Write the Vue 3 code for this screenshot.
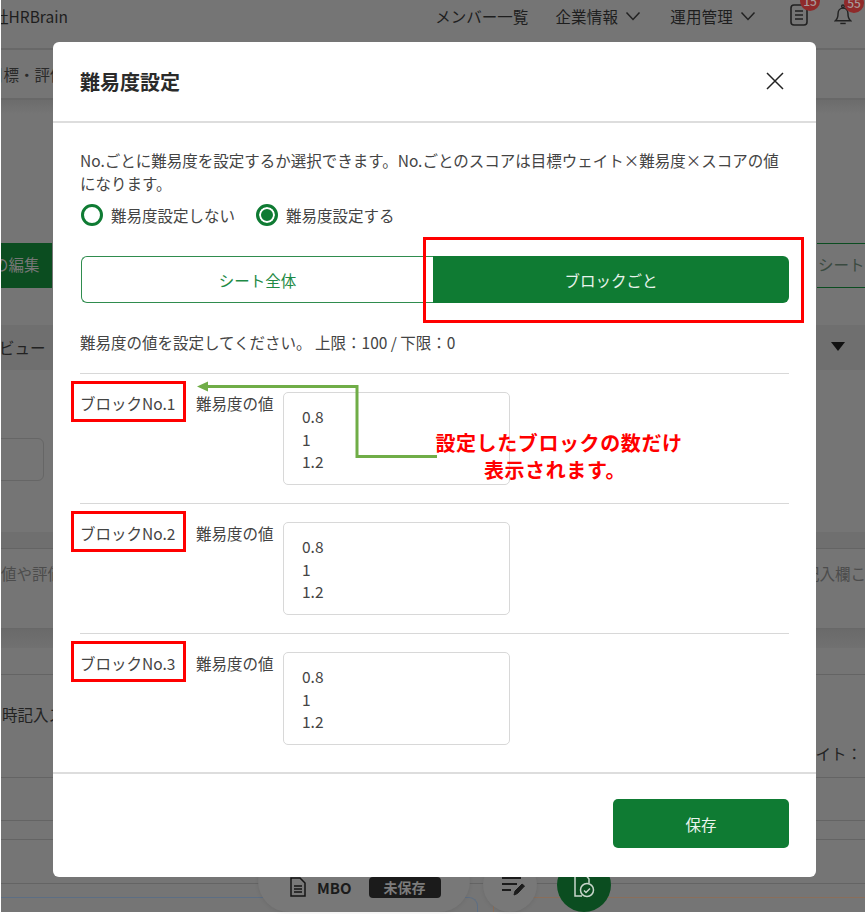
<script setup>
const blocks = [1, 2, 3]
const values = ['0.8', '1', '1.2']
</script>

<template>
  <div class="page">
    <div class="bg">
      <header class="top">
        <span class="brand">社HRBrain</span>
        <nav class="nav">
          <span class="members">メンバー一覧</span>
          <span class="drop">企業情報<svg width="16" height="10" viewBox="0 0 16 10"><path d="M1.5 1.5 8 8.5l6.5-7" fill="none" stroke="#222" stroke-width="1.5" /></svg></span>
          <span class="drop">運用管理<svg width="16" height="10" viewBox="0 0 16 10"><path d="M1.5 1.5 8 8.5l6.5-7" fill="none" stroke="#222" stroke-width="1.5" /></svg></span>
        </nav>
        <div class="alerts">
          <span class="alert clip">
            <svg width="18" height="24" viewBox="0 0 18 24" fill="none" stroke="#222" stroke-width="1.6"><rect x="1" y="3" width="16" height="20" rx="3" /><path d="M5 9h8M5 13h8M5 17h8" /></svg>
            <b class="badge">15</b>
          </span>
          <span class="alert bell">
            <svg width="18" height="24" viewBox="0 0 20 24" fill="none" stroke="#222" stroke-width="1.6"><path d="M1.5 19.5c2.5-2 3-4 3-8 0-3.500 2.200-6 5.500-6s5.500 2.500 5.500 6c0 4 .5 6 3 8z" /><path d="M7 22.500h6" /><circle cx="10" cy="3.500" r="1.500" /></svg>
            <b class="badge">55</b>
          </span>
        </div>
      </header>
      <div class="sub"><span class="crumb">目標・評価</span></div>
      <div class="fade"></div>
      <div class="tools">
        <span class="edit">の編集</span>
        <span class="tab">シート</span>
      </div>
      <div class="view"><span>ビュー</span><i class="tri"></i></div>
      <div class="field"></div>
      <div class="band b1"></div>
      <div class="row r1"><span>値や評価</span><span class="cut">記入欄こ</span></div>
      <div class="band b2"></div>
      <div class="row r2"></div>
      <div class="row r3"><span class="dark">時記入ス</span><span class="dark">ェイト：</span></div>
      <div class="row r4"></div>
      <div class="row r5"></div>
      <div class="row r6"></div>
      <div class="boxes">
        <div class="box-blue"></div>
        <div class="box-brown"></div>
      </div>
    </div>

    <div class="dock">
      <svg class="doc" width="16" height="20" viewBox="0 0 16 20" fill="none" stroke="#151515" stroke-width="1.500"><path d="M1 1h9l5 5v13H1z" /><path d="M4 9h8M4 12h8M4 15h8" /></svg>
      <b class="mbo">MBO</b>
      <span class="chip">未保存</span>
    </div>
    <span class="round pen">
      <svg width="24" height="20" viewBox="0 0 24 20" fill="none" stroke="#1c1c1c" stroke-width="1.800"><path d="M1 2h19M1 8h15M1 14h9" /><path d="M13 19l1-4 7-7 2.500 2-7 7.500z" fill="#1c1c1c" stroke-width="1" /></svg>
    </span>
    <span class="round ok">
      <svg width="22" height="28" viewBox="0 0 22 28" fill="none" stroke="#c9d6cc" stroke-width="1.500"><path d="M9 25H2V2h9l5 6v4" /><circle cx="14" cy="19" r="6.500" /><path d="M11 19.500l2 2 4-4" /></svg>
    </span>

    <section class="modal">
      <div class="head">
        <h1>難易度設定</h1>
        <svg width="20" height="20" viewBox="0 0 20 20"><path d="M2 2l16 16M18 2 2 18" stroke="#222" stroke-width="1.500" /></svg>
      </div>
      <div class="body">
        <p class="lead">No.ごとに難易度を設定するか選択できます。No.ごとのスコアは目標ウェイト×難易度×スコアの値になります。</p>
        <div class="radios">
          <span class="radio"><i class="mark"></i>難易度設定しない</span>
          <span class="radio on"><i class="mark"></i>難易度設定する</span>
        </div>
        <div class="seg">
          <span class="opt">シート全体</span>
          <span class="opt active">ブロックごと</span>
        </div>
        <p class="limit">難易度の値を設定してください。 上限：100 / 下限：0</p>
        <div v-for="n in blocks" :key="n" class="block">
          <span class="name">ブロックNo.{{ n }}<i class="hl"></i></span>
          <span class="cap">難易度の値</span>
          <div class="values">
            <div v-for="v in values" :key="v">{{ v }}</div>
          </div>
        </div>
      </div>
      <div class="foot">
        <span class="save">保存</span>
      </div>
    </section>

    <i class="hl-top"></i>
    <svg class="arrow" width="250" height="80" viewBox="0 0 250 80" fill="none">
      <path d="M240 71.500H160V1.500H10" stroke="#70ad47" stroke-width="3" />
      <path d="M0 1.500 11-3.500V6.500z" fill="#70ad47" />
    </svg>
    <p class="note">設定したブロックの数だけ<br /><span class="note-2">表示されます。</span></p>
  </div>
</template>

<style scoped>
.page {
  position: relative;
  width: 865px;
  height: 914px;
  overflow: hidden;
  background: #fff;
  font-family: "Noto Sans CJK JP", "Noto Sans", sans-serif;
  color: #3c3c3c;
}
.bg {
  margin-left: 1px;
  height: 912px;
  background: #757575;
  overflow: hidden;
  font-size: 15.5px;
}
.top {
  height: 50px;
  border-bottom: 2px solid #686868;
  box-sizing: border-box;
  display: flex;
  align-items: center;
  color: #1e1e1e;
  padding-bottom: 16px;
  line-height: 34px;
}
.brand {
  margin-left: -8px;
  flex: none;
}
.nav {
  margin-left: auto;
  display: flex;
  gap: 29px;
}
.members {
  margin-right: -2px;
}
.drop {
  display: flex;
  align-items: center;
  gap: 7px;
  letter-spacing: .2px;
}
.alerts {
  display: flex;
  margin: -4px 0 0 34px;
  gap: 26px;
  width: 75px;
  flex: none;
}
.alert {
  position: relative;
  display: block;
  height: 24px;
}
.badge {
  position: absolute;
  top: -11px;
  left: 10px;
  width: 20px;
  height: 20px;
  border-radius: 50%;
  background: #8f2a2a;
  color: #a89a9a;
  font-size: 12px;
  line-height: 20px;
  text-align: center;
  font-weight: 500;
}
.bell .badge {
  top: -9px;
}
.sub {
  height: 50px;
  box-sizing: border-box;
  border-bottom: 2px solid #686868;
  display: flex;
  align-items: center;
  color: #2a2a2a;
}
.crumb {
  margin-left: -13px;
}
.fade {
  height: 143px;
  background: linear-gradient(#6c6c6c, #757575 14px);
}
.tools {
  height: 45px;
  display: flex;
  justify-content: space-between;
}
.edit {
  width: 51px;
  background: #0b4d20;
  color: #777;
  line-height: 43px;
  white-space: nowrap;
  text-indent: -8px;
  overflow: hidden;
}
.tab {
  width: 48px;
  box-sizing: border-box;
  border-top: 1px solid #0b4d20;
  border-bottom: 1px solid #0b4d20;
  line-height: 40px;
  white-space: nowrap;
  color: #3a4a40;
  padding-left: 1px;
}
.view {
  margin-top: 37px;
  height: 45px;
  background: #6f6f6f;
  display: flex;
  align-items: center;
  justify-content: space-between;
  color: #222;
  padding: 0 20px 2px 0;
  box-sizing: border-box;
}
.view span {
  margin-left: -2px;
}
.tri {
  width: 0;
  height: 0;
  border-left: 7px solid transparent;
  border-right: 7px solid transparent;
  border-top: 9px solid #111;
}
.field {
  margin: 68px 0 51px -10px;
  width: 53px;
  height: 43px;
  box-sizing: border-box;
  border: 1px solid #666;
  border-radius: 6px;
}
.band {
  background: #6f6f6f;
  box-sizing: border-box;
  border-bottom: 1px solid #646464;
}
.b1 {
  height: 17px;
}
.b2 {
  height: 19px;
  background: linear-gradient(#6a6a6a, #717171);
  border-bottom: 0;
}
.row {
  box-sizing: border-box;
  border-bottom: 1px solid #646464;
  display: flex;
  justify-content: space-between;
  color: #4c4c4c;
  white-space: nowrap;
}
.r1 {
  height: 80px;
  padding-top: 13px;
  border-bottom-color: #686868;
}
.cut {
  margin-right: -1px;
}
.r2 {
  height: 27px;
}
.r3 {
  height: 103px;
  padding-top: 27px;
  line-height: 24px;
  align-items: flex-start;
}
.r3 span:first-child {
  margin-left: 1px;
}
.r3 span:last-child {
  margin-top: 39px;
  margin-right: 3px;
}
.dark {
  color: #222;
}
.r4 {
  height: 43px;
}
.r5 {
  height: 19px;
}
.r6 {
  height: 44px;
}
.boxes {
  display: flex;
  margin-top: 13px;
  height: 20px;
}
.box-blue {
  width: 477px;
  box-sizing: border-box;
  border-top: 1.500px solid #5c6e84;
  border-right: 1.500px solid #5c6e84;
  border-top-right-radius: 9px;
}
.box-brown {
  flex: 1;
  margin-left: 15px;
  box-sizing: border-box;
  border-top: 1.500px solid #8a6e5a;
  border-left: 1.500px solid #8a6e5a;
}
.dock {
  position: absolute;
  left: 258px;
  top: 850px;
  width: 212px;
  height: 62px;
  box-sizing: border-box;
  border-radius: 31px;
  background: #787878;
  box-shadow: 0 1px 4px rgba(0, 0, 0, .08);
  display: flex;
  align-items: center;
  padding-left: 32px;
  padding-top: 12px;
}
.mbo {
  margin-left: 11px;
  font-size: 15px;
  color: #1b1b1b;
  font-weight: 700;
}
.chip {
  margin-left: 17px;
  width: 72px;
  height: 21px;
  background: #1b1b1b;
  color: #7c7c7c;
  font-size: 14px;
  line-height: 21px;
  text-align: center;
  border-radius: 4px;
  font-weight: 700;
}
.round {
  position: absolute;
  top: 858px;
  width: 54px;
  height: 54px;
  border-radius: 50%;
  display: flex;
  align-items: center;
  justify-content: center;
  box-sizing: border-box;
}
.pen {
  left: 483px;
  background: #787878;
  box-shadow: 0 1px 4px rgba(0, 0, 0, .08);
  padding: 2px 0 0 6px;
}
.ok {
  left: 557px;
  background: #0b4d20;
}
.modal {
  position: absolute;
  left: 53px;
  top: 42px;
  width: 763px;
  height: 835px;
  background: #fff;
  border-radius: 6px;
  display: flex;
  flex-direction: column;
  font-size: 15.5px;
}
.head {
  height: 81px;
  box-sizing: border-box;
  border-bottom: 2px solid #ddd;
  display: flex;
  align-items: center;
  justify-content: space-between;
  padding: 0 31px 0 27px;
  flex: none;
}
.head h1 {
  margin: 0;
  font-size: 20px;
  font-weight: 700;
  color: #2a2a2a;
}
.head svg {
  margin-top: -2px;
}
.body {
  padding: 26px 27px 0 27px;
  flex: 1;
}
.lead {
  margin: 0;
  line-height: 23px;
  color: #444;
}
.radios {
  display: flex;
  gap: 21px;
  margin: 8px 0 0 1px;
  height: 24px;
  align-items: center;
}
.radio {
  display: flex;
  align-items: center;
  gap: 8px;
  color: #444;
}
.mark {
  width: 22px;
  height: 22px;
  box-sizing: border-box;
  border: 3px solid #0f7b33;
  border-radius: 50%;
  background: #fff;
}
.on .mark {
  background: #0f7b33;
  box-shadow: inset 0 0 0 2px #fff;
}
.seg {
  display: flex;
  margin: 29px 0 0 1px;
  height: 47px;
}
.opt {
  flex: none;
  width: 352px;
  display: flex;
  align-items: center;
  justify-content: center;
  box-sizing: border-box;
  border: 1.500px solid #2f8c4e;
  border-right: 0;
  border-radius: 6px 0 0 6px;
  color: #1e8a45;
}
.opt.active {
  flex: 1;
  width: auto;
  background: #0f7b33;
  border: 0;
  border-radius: 0 6px 6px 0;
  color: #e8f3ec;
}
.limit {
  margin: 28px 0 0;
  line-height: 22px;
  color: #444;
  padding-bottom: 20px;
}
.block {
  border-top: 1px solid #d8d8d8;
  height: 130px;
  box-sizing: border-box;
  padding-top: 18px;
  display: flex;
  align-items: flex-start;
  line-height: 22px;
  color: #444;
}
.name {
  position: relative;
  width: 116px;
  flex: none;
  white-space: nowrap;
}
.hl {
  position: absolute;
  left: -9px;
  top: -11px;
  width: 115px;
  height: 41px;
  box-sizing: border-box;
  border: 3px solid #f00;
}
.cap {
  width: 87px;
  flex: none;
}
.values {
  width: 227px;
  height: 93px;
  box-sizing: border-box;
  border: 1.500px solid #d8d8d8;
  border-radius: 5px;
  padding: 12px 18px;
  line-height: 22.500px;
}
.foot {
  border-top: 2px solid #ddd;
  height: 105px;
  box-sizing: border-box;
  display: flex;
  justify-content: flex-end;
  align-items: flex-start;
  padding: 25px 27px 0 0;
  flex: none;
}
.save {
  width: 176px;
  height: 49px;
  background: #0f7b33;
  color: #eaf4ee;
  border-radius: 5px;
  display: flex;
  align-items: center;
  justify-content: center;
}
.hl-top {
  position: absolute;
  left: 423px;
  top: 237px;
  width: 381px;
  height: 86px;
  box-sizing: border-box;
  border: 3px solid #f00;
}
.arrow {
  position: absolute;
  left: 197px;
  top: 385px;
  overflow: visible;
}
.note {
  position: absolute;
  left: 429px;
  top: 429px;
  width: 260px;
  margin: 0;
  text-align: center;
  color: #f00;
  font-size: 20px;
  font-weight: 700;
  line-height: 27px;
  letter-spacing: .6px;
}
.note-2 {
  display: inline-block;
  margin-right: 8px;
}
</style>
